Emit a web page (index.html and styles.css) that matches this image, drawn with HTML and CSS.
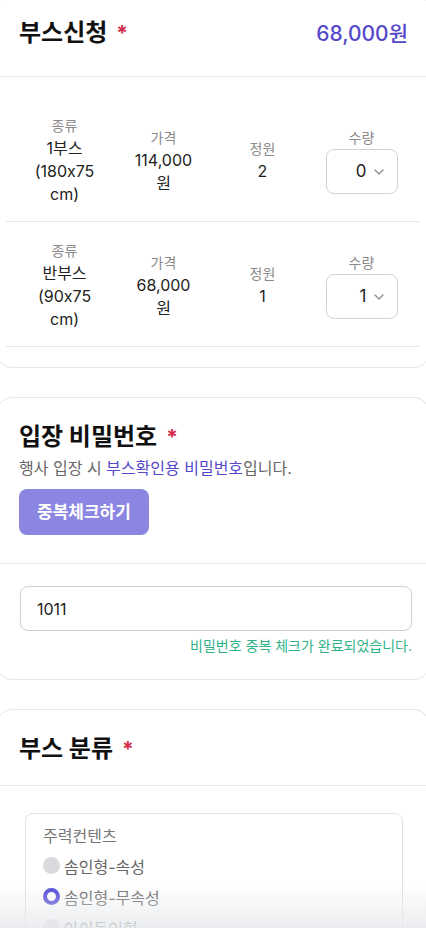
FILE: index.html
```html
<!DOCTYPE html>
<html lang="ko">
<head>
    <meta charset="UTF-8">
    <meta name="viewport" content="width=device-width, initial-scale=1.0">
    <title>부스신청</title>
    <link rel="stylesheet" href="styles.css">
</head>
<body>
    <div class="page">
        <section class="card card-booth">
            <div class="card-head head-row">
                <h2 class="card-title">부스신청<span class="req">*</span></h2>
                <span class="total">68,000원</span>
            </div>
            <div class="booth-list">
                <div class="booth-row">
                    <div class="cell">
                        <div class="cell-label">종류</div>
                        <div class="cell-value">1부스<br>(180x75<br>cm)</div>
                    </div>
                    <div class="cell">
                        <div class="cell-label">가격</div>
                        <div class="cell-value">114,000<br>원</div>
                    </div>
                    <div class="cell">
                        <div class="cell-label">정원</div>
                        <div class="cell-value">2</div>
                    </div>
                    <div class="cell">
                        <div class="cell-label">수량</div>
                        <div class="qty-select">
                            <span>0</span>
                            <svg width="10" height="6" viewBox="0 0 10 6"><path d="M1 1l4 4 4-4" fill="none" stroke="#8a8a8a" stroke-width="1.3" stroke-linecap="round" stroke-linejoin="round"/></svg>
                        </div>
                    </div>
                </div>
                <div class="booth-row">
                    <div class="cell">
                        <div class="cell-label">종류</div>
                        <div class="cell-value">반부스<br>(90x75<br>cm)</div>
                    </div>
                    <div class="cell">
                        <div class="cell-label">가격</div>
                        <div class="cell-value">68,000<br>원</div>
                    </div>
                    <div class="cell">
                        <div class="cell-label">정원</div>
                        <div class="cell-value">1</div>
                    </div>
                    <div class="cell">
                        <div class="cell-label">수량</div>
                        <div class="qty-select">
                            <span>1</span>
                            <svg width="10" height="6" viewBox="0 0 10 6"><path d="M1 1l4 4 4-4" fill="none" stroke="#8a8a8a" stroke-width="1.3" stroke-linecap="round" stroke-linejoin="round"/></svg>
                        </div>
                    </div>
                </div>
            </div>
        </section>

        <section class="card">
            <div class="card-head">
                <h2 class="card-title">입장 비밀번호<span class="req">*</span></h2>
                <p class="card-desc">행사 입장 시 <span class="accent">부스확인용 비밀번호</span>입니다.</p>
                <button class="btn-check">중복체크하기</button>
            </div>
            <div class="card-body pw-body">
                <input class="text-input" type="text" value="1011">
                <p class="msg-ok">비밀번호 중복 체크가 완료되었습니다.</p>
            </div>
        </section>

        <section class="card">
            <div class="card-head head-short">
                <h2 class="card-title">부스 분류<span class="req">*</span></h2>
            </div>
            <div class="card-body cat-body">
                <div class="cat-box">
                    <div class="cat-label">주력컨텐츠</div>
                    <label class="radio"><span class="dot"></span>솜인형-속성</label>
                    <label class="radio"><span class="dot checked"></span>솜인형-무속성</label>
                    <label class="radio"><span class="dot"></span>아이돌인형</label>
                    <label class="radio"><span class="dot"></span>기타</label>
                </div>
            </div>
        </section>
    </div>
    <div class="bottom-fade"></div>
</body>
</html>
```

FILE: styles.css
```css
body {
    margin: 0;
    background: #fff;
    font-family: Inter, "Noto Sans CJK KR", sans-serif;
    color: #222;
    overflow-x: hidden;
}
.page {
    display: flex;
    flex-direction: column;
    gap: 29px;
    margin: -6px -4px 0;
}
.card {
    border: 1px solid #e6e6e6;
    border-radius: 16px;
    background: #fff;
}
.card-head {
    padding: 24px 21px 28px 22px;
    border-bottom: 1px solid #e6e6e6;
}
.head-row {
    display: flex;
    justify-content: space-between;
    align-items: center;
    padding-top: 23px;
    padding-bottom: 27px;
}
.head-short {
    padding-bottom: 20px;
}
.card-title {
    margin: 0;
    font-size: 24px;
    line-height: 30px;
    font-weight: 700;
    color: #111;
}
.req {
    color: #d42a4b;
    font-size: 21px;
    margin-left: 9px;
}
.total {
    font-size: 21px;
    line-height: 30px;
    font-weight: 500;
    color: #5548c9;
}
.card-desc {
    margin: 4px 0 0;
    font-size: 16px;
    line-height: 22px;
    color: #666;
}
.accent {
    color: #5548c9;
}
.btn-check {
    display: block;
    margin-top: 10px;
    height: 46px;
    padding: 0 18px;
    border: none;
    border-radius: 8px;
    background: #8b86e2;
    color: #fff;
    font-family: inherit;
    font-size: 17px;
    line-height: 46px;
    font-weight: 700;
}

/* booth table */
.booth-list {
    padding: 20px 9px 20px;
}
.booth-row {
    display: grid;
    grid-template-columns: repeat(4, 1fr);
    align-items: center;
    padding: 17px 9px 15px;
    border-bottom: 1px solid #e6e6e6;
}
.cell {
    display: flex;
    flex-direction: column;
    align-items: center;
    text-align: center;
    line-height: 23px;
}
.cell-label {
    font-size: 14px;
    color: #8a8a8a;
}
.cell-value {
    font-size: 16px;
    color: #222;
}
.qty-select {
    display: flex;
    align-items: center;
    justify-content: flex-end;
    gap: 7px;
    box-sizing: border-box;
    width: 72px;
    height: 45px;
    padding-right: 13px;
    border: 1px solid #d2d2d2;
    border-radius: 8px;
    font-size: 17px;
}

/* password */
.card-body {
    padding: 22px 17px 24px 23px;
}
.text-input {
    display: block;
    box-sizing: border-box;
    width: 100%;
    height: 45px;
    padding: 0 16px;
    border: 1px solid #cfcfcf;
    border-radius: 8px;
    font-family: inherit;
    font-size: 16px;
    color: #222;
}
.msg-ok {
    margin: 6px 0 0;
    text-align: right;
    font-size: 14px;
    line-height: 18px;
    color: #2fb287;
}

/* category */
.cat-body {
    padding: 27px 26px 24px 28px;
}
.cat-box {
    border: 1px solid #e2e2e2;
    border-radius: 8px;
    padding: 11px 17px;
}
.cat-label {
    font-size: 16px;
    line-height: 22px;
    color: #777;
    margin-bottom: 3px;
}
.radio {
    display: flex;
    align-items: center;
    gap: 4px;
    height: 31px;
    font-size: 16px;
    color: #666;
}
.dot {
    box-sizing: border-box;
    width: 17px;
    height: 17px;
    border-radius: 50%;
    background: #d9d9de;
}
.dot.checked {
    background: #fff;
    border: 4.5px solid #4f44d6;
}

.bottom-fade {
    position: fixed;
    left: 0;
    right: 0;
    bottom: 0;
    height: 44px;
    background: linear-gradient(rgba(236, 237, 240, 0), rgba(232, 234, 237, 0.85));
    pointer-events: none;
}
```
